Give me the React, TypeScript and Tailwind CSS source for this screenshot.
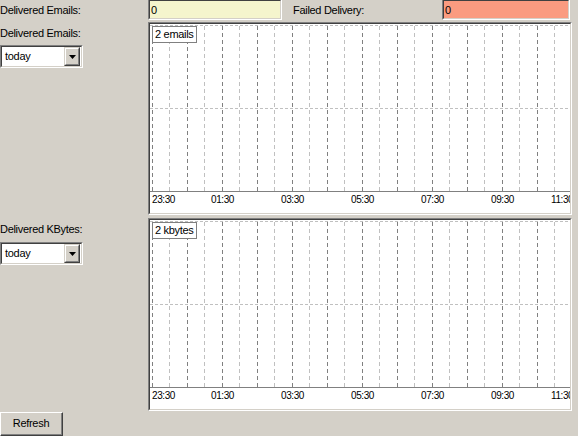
import React from "react";

const FONT = { fontFamily: '"Liberation Sans", Arial, sans-serif' };

function Sunken({ className, innerClass, children }: { className?: string; innerClass?: string; children?: React.ReactNode }) {
  return (
    <div className={"border-t border-l border-[#808080] border-b border-r border-b-white border-r-white " + (className ?? "")}>
      <div className={"h-full border-t border-l border-[#404040] border-b border-r border-b-[#d4d0c8] border-r-[#d4d0c8] " + (innerClass ?? "")}>
        {children}
      </div>
    </div>
  );
}

function Dropdown() {
  return (
    <Sunken className="w-[83px] h-[23px]" innerClass="bg-white flex items-center">
      <span className="pl-[3px] flex-1 text-[11px] text-black leading-none">today</span>
      <div className="w-[16px] h-[19px] mr-[1px] bg-[#d4d0c8] border-t border-l border-t-[#d4d0c8] border-l-[#d4d0c8] border-b border-r border-b-[#404040] border-r-[#404040]">
        <div className="w-full h-full border-t border-l border-t-white border-l-white border-b border-r border-b-[#808080] border-r-[#808080] flex items-center justify-center">
          <svg width="7" height="4" viewBox="0 0 7 4">
            <path d="M0 0H7L3.5 4Z" fill="#000" />
          </svg>
        </div>
      </div>
    </Sunken>
  );
}

const W = 420;

function Chart({ label, h, axisY, midY }: { label: string; h: number; axisY: number; midY: number }) {
  const darks: number[] = [];
  const lights: number[] = [];
  for (let k = 0; k < 13; k++) {
    darks.push(2 + 35 * k);
    lights.push(19 + 35 * k);
  }
  const labels = [
    { t: "23:30", x: 2 },
    { t: "01:30", x: 61 },
    { t: "03:30", x: 131 },
    { t: "05:30", x: 201 },
    { t: "07:30", x: 271 },
    { t: "09:30", x: 341 },
    { t: "11:30", x: 401 },
  ];
  return (
    <Sunken className="w-[424px]" innerClass="bg-white relative">
      <svg width={W} height={h} className="block" style={FONT}>
        <line x1={0} x2={W} y1={1.5} y2={1.5} stroke="#c0c0c0" strokeDasharray="3 2" />
        <line x1={0} x2={W} y1={midY + 0.5} y2={midY + 0.5} stroke="#c0c0c0" strokeDasharray="3 2" />
        {lights.map((x) => (
          <line key={"l" + x} x1={x + 0.5} x2={x + 0.5} y1={2} y2={axisY} stroke="#c0c0c0" strokeDasharray="4 3" />
        ))}
        {darks.map((x) => (
          <line key={"d" + x} x1={x + 0.5} x2={x + 0.5} y1={2} y2={axisY} stroke="#808080" strokeDasharray="4 3" />
        ))}
        <line x1={0} x2={W} y1={axisY + 0.5} y2={axisY + 0.5} stroke="#808080" />
        {labels.map((l) => (
          <text key={l.t} x={l.x} y={axisY + 12} fontSize={10} letterSpacing={-0.4} fill="#000">
            {l.t}
          </text>
        ))}
      </svg>
      <div className="absolute left-[2px] top-[2px] h-[17px] px-[2px] border border-[#808080] bg-white text-[11px] text-black leading-[15px]">
        {label}
      </div>
    </Sunken>
  );
}

export default function App() {
  return (
    <div className="w-[578px] h-[436px] bg-[#d4d0c8] overflow-hidden text-black text-[11px] tracking-[-0.3px]" style={FONT}>
      <div className="flex h-[22px]">
        <div className="w-[148px] pt-[4px] leading-[13px]">Delivered Emails:</div>
        <Sunken className="w-[134px] h-[21px] -mt-[1px]" innerClass="bg-[#f5f5cd] pl-[1px] pt-[3px] leading-[13px]">0</Sunken>
        <div className="w-[160px] pl-[11px] pt-[4px] leading-[13px]">Failed Delivery:</div>
        <Sunken className="w-[128px] h-[21px] -mt-[1px]" innerClass="bg-[#fa9b80] pl-[1px] pt-[3px] leading-[13px]">0</Sunken>
      </div>
      <div className="flex flex-col gap-[3px]">
        <div className="flex">
          <div className="w-[148px] flex flex-col">
            <div className="pt-[5px] leading-[13px]">Delivered Emails:</div>
            <div className="mt-[5px]"><Dropdown /></div>
          </div>
          <Chart label="2 emails" h={189} axisY={167} midY={84} />
        </div>
        <div className="flex">
          <div className="w-[148px] flex flex-col">
            <div className="pt-[5px] leading-[13px]">Delivered KBytes:</div>
            <div className="mt-[6px]"><Dropdown /></div>
          </div>
          <Chart label="2 kbytes" h={189} axisY={167} midY={84} />
        </div>
      </div>
      <button className="mt-[1px] w-[63px] h-[24px] bg-[#d4d0c8] border-t border-l border-t-white border-l-white border-b border-r border-b-[#404040] border-r-[#404040] p-0">
        <div className="w-full h-full border-b border-r border-b-[#808080] border-r-[#808080] flex items-center justify-center text-[11px]">
          Refresh
        </div>
      </button>
    </div>
  );
}
